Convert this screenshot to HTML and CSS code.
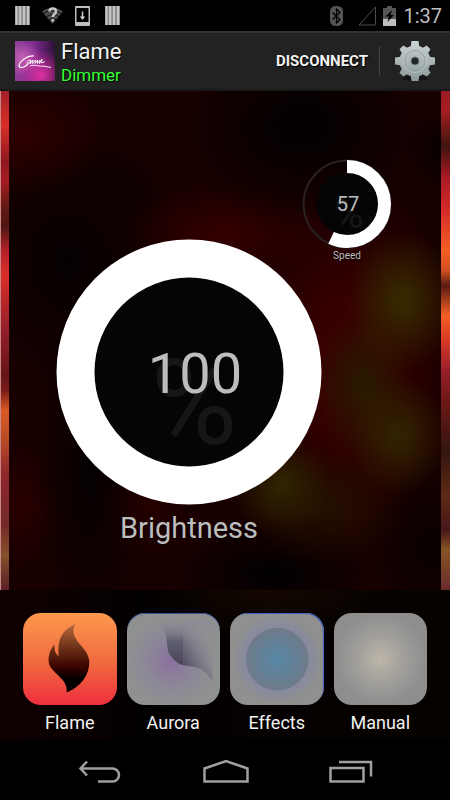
FILE: index.html
```html
<!DOCTYPE html>
<html lang="en">
<head>
    <meta charset="UTF-8">
    <meta name="viewport" content="width=device-width, initial-scale=1.0">
    <title>Flame Dimmer</title>
    <link rel="stylesheet" href="styles.css">
</head>
<body>
    <div class="screen">

        <div class="status-bar">
            <div class="status-left">
                <svg width="15" height="20" viewBox="0 0 15 20">
                    <rect width="15" height="19" fill="#8c8c8c"/>
                    <path d="M1.5 0v19M5.2 0v19M9 0v19M13 0v19" stroke="#c6c6c6" stroke-width="2"/>
                </svg>
                <svg width="21" height="20" viewBox="0 0 21 20">
                    <path d="M0 5.500Q10.500 -2 21 5.500L10.500 18Z" fill="#4c4c4c"/>
                    <path d="M1.500 7.500Q10.500 1.500 19.500 7.500M4 11Q10.500 6 17 11M6.500 14Q10.500 11 14.500 14" fill="none" stroke="#111"/>
                    <path d="M7.500 5.500C7.500 1.500 14 1.500 14 5.500C14 8 10.800 8 10.800 11M10.800 13v2.500" fill="none" stroke="#c8c8c8" stroke-width="2.500"/>
                </svg>
                <svg width="15" height="20" viewBox="0 0 15 20">
                    <rect width="15" height="20" rx="1" fill="#bebebe"/>
                    <rect x="1.500" y="2" width="12" height="14" fill="#000"/>
                    <path d="M7.500 5.500v6" fill="none" stroke="#d0d0d0" stroke-width="1.500"/>
                    <path d="M4.800 10.500h5.400l-2.700 3.500Z" fill="#d0d0d0"/>
                </svg>
                <svg class="last-note" width="15" height="20" viewBox="0 0 15 20">
                    <rect width="15" height="19" fill="#8c8c8c"/>
                    <path d="M1.500 0v19M5.200 0v19M9 0v19M13 0v19" stroke="#c6c6c6" stroke-width="2"/>
                </svg>
            </div>
            <div class="status-right">
                <svg class="bluetooth" width="13" height="20" viewBox="0 0 13 20">
                    <rect width="13" height="20" rx="5.500" fill="#555"/>
                    <path d="M2.500 6.500L10 13.500L6.500 17V3L10 6.500L2.500 13.500" fill="none" stroke="#000" stroke-width="1.300"/>
                </svg>
                <svg width="18" height="20" viewBox="0 0 18 20">
                    <path d="M17.500 1V19H1Z" fill="none" stroke="#4c4c4c"/>
                </svg>
                <svg width="13" height="20" viewBox="0 0 13 20">
                    <path d="M4 0h5v2h4v18H0V2h4Z" fill="#555"/>
                    <rect y="13" width="13" height="7" fill="#bebebe"/>
                    <path d="M9 4L2.500 10.500H6L4.500 16L11 9H7.500Z" fill="#000"/>
                </svg>
                <span class="clock">1:37</span>
            </div>
        </div>

        <header class="action-bar">
            <svg class="logo" width="40" height="40" viewBox="0 0 40 40">
                <defs>
                    <linearGradient id="logoBase" x1="0" y1="0" x2="1" y2="0">
                        <stop offset="0" stop-color="#8c3f96"/>
                        <stop offset=".5" stop-color="#7a2a8c"/>
                        <stop offset="1" stop-color="#2c1236"/>
                    </linearGradient>
                    <radialGradient id="logoPink" cx=".65" cy=".85" r=".65">
                        <stop offset="0" stop-color="#e02fa2"/>
                        <stop offset="1" stop-color="#c02c98" stop-opacity="0"/>
                    </radialGradient>
                    <radialGradient id="logoLight" cx=".2" cy=".45" r=".45">
                        <stop offset="0" stop-color="#c965b8"/>
                        <stop offset="1" stop-color="#c965b8" stop-opacity="0"/>
                    </radialGradient>
                </defs>
                <rect width="40" height="40" fill="url(#logoBase)"/>
                <rect width="40" height="40" fill="url(#logoLight)"/>
                <rect width="40" height="40" fill="url(#logoPink)"/>
                <path d="M19 15C12 14 4 21 4 25C5 28 10 26 13 23" fill="none" stroke="#fff" stroke-width="1.200"/>
                <path d="M15 19C12 19 11 23 13 23L16 19L15 23L18 19L17.500 22.500L20.500 19L20 22.500L22.500 19V22.500L25 19L24.500 22.500L27 18L26.500 22L30 20.500M15 25C20 23 24 26 28 25L36 26.500" fill="none" stroke="#fff" stroke-width=".9"/>
            </svg>
            <div class="titles">
                <h1>Flame</h1>
                <p>Dimmer</p>
            </div>
            <button type="button" class="disconnect">DISCONNECT</button>
            <button type="button" class="settings" aria-label="Settings">
                <svg width="40" height="40" viewBox="0 0 40 40">
                    <defs>
                        <linearGradient id="gearFill" gradientUnits="userSpaceOnUse" x1="0" y1="0" x2="0" y2="40">
                            <stop offset="0" stop-color="#cbd4d4"/>
                            <stop offset="1" stop-color="#8c9899"/>
                        </linearGradient>
                    </defs>
                    <ellipse cx="20" cy="37" rx="13" ry="3" fill="#151515"/>
                    <g fill="url(#gearFill)">
                        <circle cx="20" cy="20" r="15.500"/>
                        <path d="M16.500 0h7l1 7h-9ZM16.500 40h7l1-7h-9ZM0 16.500v7l7 1v-9ZM40 16.500v7l-7 1v-9Z"/>
                        <path d="M8.300 4.500L4.500 8.300L8 14L14 8ZM31.700 4.500L35.500 8.300L32 14L26 8ZM8.300 35.500L4.500 31.700L8 26L14 32ZM31.700 35.500L35.500 31.700L32 26L26 32Z"/>
                    </g>
                    <circle cx="20" cy="20" r="10.500" fill="none" stroke="#909c9d"/>
                    <circle cx="20" cy="20" r="11.500" fill="none" stroke="#c0caca" stroke-width=".8"/>
                    <circle cx="20" cy="20" r="4" fill="#222525" stroke="#727d7e"/>
                </svg>
            </button>
        </header>

        <main class="stage">
            <div class="edge edge-left"></div>
            <div class="panel">
                <div class="dial dial-speed">
                    <svg width="90" height="90" viewBox="0 0 90 90">
                        <circle cx="45" cy="45" r="43.500" fill="none" stroke="#2a2222" stroke-width="2"/>
                        <circle cx="45" cy="45" r="31" fill="#050505"/>
                        <circle class="arc" cx="45" cy="45" r="37.500" stroke-width="13" pathLength="100" stroke-dasharray="57 100" transform="rotate(-90 45 45)"/>
                        <text class="percent" x="47" y="69" font-size="40">%</text>
                        <text class="value" x="46" y="52" font-size="20">57</text>
                    </svg>
                    <input type="range" id="speed" min="0" max="100" value="57">
                    <label for="speed">Speed</label>
                </div>
                <div class="dial dial-brightness">
                    <svg width="266" height="266" viewBox="0 0 266 266">
                        <circle cx="133" cy="133" r="95" fill="#050505"/>
                        <circle class="arc" cx="133" cy="133" r="113.500" stroke-width="38"/>
                        <text class="percent" x="138" y="205" font-size="118">%</text>
                        <text class="value" x="139" y="154" font-size="56">100</text>
                    </svg>
                    <input type="range" id="brightness" min="0" max="100" value="100">
                    <label for="brightness">Brightness</label>
                </div>
            </div>
            <div class="edge edge-right"></div>
        </main>

        <nav class="modes">
            <button type="button" class="mode">
                <svg class="tile tile-flame" viewBox="0 0 93 92">
                    <defs>
                        <linearGradient id="flameFill" x1="0" y1="0" x2="0" y2="1">
                            <stop offset="0" stop-color="#b9683a"/>
                            <stop offset=".3" stop-color="#75391e"/>
                            <stop offset=".62" stop-color="#3c0400"/>
                            <stop offset=".8" stop-color="#050000"/>
                        </linearGradient>
                    </defs>
                    <path d="M52 11C40 17 34 24 35.500 43C32 40 31 37 31.500 31C25 38 23 50 29 56C37 65 44 68 43.500 79C58 73 66 62 66 48C65 33 44 27 52 11Z" fill="url(#flameFill)"/>
                </svg>
                <span>Flame</span>
            </button>
            <button type="button" class="mode">
                <svg class="tile tile-aurora" viewBox="0 0 93 92">
                    <defs>
                        <linearGradient id="auroraLeft" x1="0" y1="0" x2="0" y2="1">
                            <stop offset="0" stop-color="#8a8c96" stop-opacity="0"/>
                            <stop offset=".45" stop-color="#5f6070"/>
                            <stop offset="1" stop-color="#4b4258"/>
                        </linearGradient>
                        <linearGradient id="auroraRight" gradientUnits="userSpaceOnUse" x1="54" y1="52" x2="86" y2="34">
                            <stop offset="0" stop-color="#4f475c"/>
                            <stop offset=".5" stop-color="#747480" stop-opacity=".8"/>
                            <stop offset="1" stop-color="#8f9190" stop-opacity="0"/>
                        </linearGradient>
                        <linearGradient id="auroraTop" x1="0" y1="0" x2="0" y2="1">
                            <stop offset="0" stop-color="#8c8e94"/>
                            <stop offset=".5" stop-color="#8c8e94" stop-opacity="0"/>
                        </linearGradient>
                    </defs>
                    <path d="M29 8C44 20 37 34 43 42C48 49 52 51 56 52V8Z" fill="url(#auroraLeft)"/>
                    <path d="M56 8V52C62 53 66 53 72 55Q80 59 85 69V8Z" fill="url(#auroraRight)"/>
                    <path d="M56 7V52H86V7Z" fill="url(#auroraTop)"/>
                </svg>
                <span>Aurora</span>
            </button>
            <button type="button" class="mode">
                <svg class="tile tile-effects" viewBox="0 0 93 92">
                    <defs>
                        <radialGradient id="effectsFill">
                            <stop offset="0" stop-color="#5687a8"/>
                            <stop offset="1" stop-color="#6e7a88"/>
                        </radialGradient>
                    </defs>
                    <circle cx="47" cy="46" r="31" fill="url(#effectsFill)"/>
                </svg>
                <span>Effects</span>
            </button>
            <button type="button" class="mode">
                <svg class="tile tile-manual" viewBox="0 0 93 92"></svg>
                <span>Manual</span>
            </button>
        </nav>

        <div class="nav-bar">
            <button type="button" aria-label="Back">
                <svg width="44" height="26" viewBox="0 0 44 26">
                    <path d="M2 9.500H34.500A6.500 6.500 0 0 1 34.500 22.500H20M9 2.500L2.500 9.500L9 16.500"/>
                </svg>
            </button>
            <button type="button" aria-label="Home">
                <svg width="46" height="26" viewBox="0 0 46 26">
                    <path d="M1.500 22.500V9.500L23 2L44.500 9.500V22.500Z"/>
                </svg>
            </button>
            <button type="button" aria-label="Recent apps">
                <svg width="44" height="26" viewBox="0 0 44 26">
                    <path d="M1.500 9H34.500V22.500H1.500ZM10 3H42V17.500"/>
                </svg>
            </button>
        </div>
    </div>
</body>
</html>
```
FILE: styles.css
```css
* {
    box-sizing: border-box;
}
body {
    margin: 0;
    background-color: #000;
    color: #f3f3f3;
    font-family: Roboto, "Liberation Sans", sans-serif;
}
button {
    padding: 0;
    border: none;
    background: none;
    color: inherit;
    font-family: inherit;
    cursor: pointer;
}
svg {
    display: block;
}
.screen {
    display: flex;
    flex-direction: column;
    min-height: 100vh;
}

/* status bar */
.status-bar {
    display: flex;
    justify-content: space-between;
    align-items: center;
    height: 31px;
    padding: 0 8px 0 15px;
}
.status-left {
    display: flex;
    gap: 12px;
}
.last-note {
    margin-left: 3px;
}
.status-right {
    display: flex;
    align-items: center;
    gap: 7px;
}
.bluetooth {
    margin-right: 8px;
}
.clock {
    color: #bebebe;
    font-size: 20px;
    line-height: 24px;
}

/* action bar */
.action-bar {
    display: flex;
    align-items: center;
    height: 60px;
    padding-left: 15px;
    background-color: #222;
    border-top: 2px solid #333;
    border-bottom: 2px solid #191919;
}
.titles {
    flex: 1;
    padding: 2px 0 0 6px;
    text-shadow: 1px 1px 1px #000;
}
.titles h1 {
    margin: 0;
    font-size: 22px;
    font-weight: 400;
    line-height: 26px;
}
.titles p {
    margin: 0;
    color: #3f3;
    font-size: 17px;
    line-height: 20px;
}
.disconnect {
    height: 30px;
    padding-right: 11px;
    border-right: 1px solid #444;
    font-size: 15px;
    font-weight: 700;
    text-shadow: 1px 1px 1px #000;
}
.settings {
    padding: 0 15px;
}

/* dials */
.stage {
    display: flex;
    flex: 1;
}
.edge {
    width: 9px;
}
.edge-left {
    border-left: 1px solid #c88;
    background: linear-gradient(#a02226 0%, #d92f28 7%, #8f1720 14%, #a51a22 18%, #641a12 23%, #4c1712 27%, #b3222a 32%, #d92f28 37%, #99202a 47%, #651416 57%, #7a1c17 60%, #d95a24 64%, #b84a26 70%, #8d262a 77%, #742a28 87%, #85502a 93%, #5a2026 100%);
}
.edge-right {
    background: linear-gradient(#9a1c24 0%, #a51e22 4%, #401410 11%, #a51a24 17%, #d52c28 24%, #f55f24 32%, #cf4f20 36%, #5a1a14 39%, #f55f24 45%, #d83a26 50%, #98202a 56%, #6e1816 62%, #33150f 72%, #5f2a16 81%, #48161a 88%, #875424 92%, #6a2a2c 100%);
}
.panel {
    display: grid;
    flex: 1;
    align-items: start;
    padding: 68px 49px 0 47px;
    background-color: #190000;
    background-image:
        radial-gradient(55px 70px at 91% 42%, #352600 15%, transparent),
        radial-gradient(50px 60px at 90% 69%, #302100 15%, transparent),
        radial-gradient(50px 75px at 82% 59%, #2a1900 10%, transparent),
        radial-gradient(50px 50px at 63% 79%, #2e2200 10%, transparent),
        radial-gradient(80px 60px at 73% 83%, #241000, transparent),
        radial-gradient(70px 100px at 98% 92%, #080000, transparent),
        radial-gradient(35px 45px at 100% 12%, #060000, transparent),
        radial-gradient(130px 100px at 68% 7%, #040000 15%, transparent),
        radial-gradient(110px 180px at 78% 54%, #370000 30%, transparent),
        radial-gradient(80px 60px at 3% 9%, #2e0000, transparent),
        radial-gradient(50px 40px at 25% 19%, #0c0000, transparent),
        radial-gradient(100px 50px at 50% 29%, #350000, transparent),
        radial-gradient(120px 140px at 14% 34%, #050000, transparent),
        radial-gradient(60px 200px at 19% 75%, #060000 10%, transparent),
        radial-gradient(50px 50px at 29% 83%, #2a0000, transparent),
        radial-gradient(40px 60px at 3% 83%, #2a0000, transparent),
        radial-gradient(110px 60px at 61% 97%, #030000 10%, transparent);
}
.dial {
    display: grid;
    grid-area: 1 / 1;
    grid-template-columns: auto;
    justify-items: center;
    color: #bdbdbd;
    text-shadow: 1px 1px 1px #000;
}
.dial svg,
.dial input {
    grid-area: 1 / 1;
}
.dial input {
    width: 0;
    min-width: 100%;
    height: 100%;
    margin: 0;
    opacity: 0;
    cursor: pointer;
}
.dial text {
    text-anchor: middle;
    text-shadow: none;
}
.arc {
    fill: none;
    stroke: #fff;
}
.percent {
    fill: #161616;
}
.value {
    fill: #bdbdbd;
}
.dial-speed {
    justify-self: end;
    font-size: 10px;
    line-height: 14px;
}
.dial-brightness {
    justify-self: start;
    margin-top: 80px;
    font-size: 29px;
    line-height: 46px;
}

/* mode buttons */
.modes {
    display: grid;
    grid-template-columns: repeat(4, 1fr);
    gap: 10px;
    height: 150px;
    padding: 23px 23px 0;
    background: radial-gradient(120px 50px at 60% 0, #140800, transparent),
        linear-gradient(90deg, #100000, #030000 30%, #060200);
}
.mode {
    display: flex;
    flex-direction: column;
    align-items: center;
    gap: 8px;
    font-size: 18px;
    line-height: 20px;
}
.tile {
    width: 100%;
    border-radius: 18px;
}
.tile-flame {
    background: linear-gradient(#fb994d, #f0693f 55%, #ee2f3e);
}
.tile-aurora {
    background: radial-gradient(circle at 48% 52%, #8a70a0, #8c8698 35%, #8f9190 65%);
    box-shadow: inset 0 1px #3c549c;
}
.tile-effects {
    background: radial-gradient(circle, #6c8ba8, #8589a0 45%, #90908f 68%);
    box-shadow: inset -1px 1px #4560b8;
}
.tile-manual {
    background: radial-gradient(circle, #bdb6a8, #a09e9b 38%, #8e8e8e 70%);
}

/* system buttons */
.nav-bar {
    display: flex;
    justify-content: space-between;
    align-items: center;
    height: 60px;
    padding: 4px 77px 0 78px;
}
.nav-bar path {
    fill: none;
    stroke: #a0a0a0;
    stroke-width: 2.5;
}
```
